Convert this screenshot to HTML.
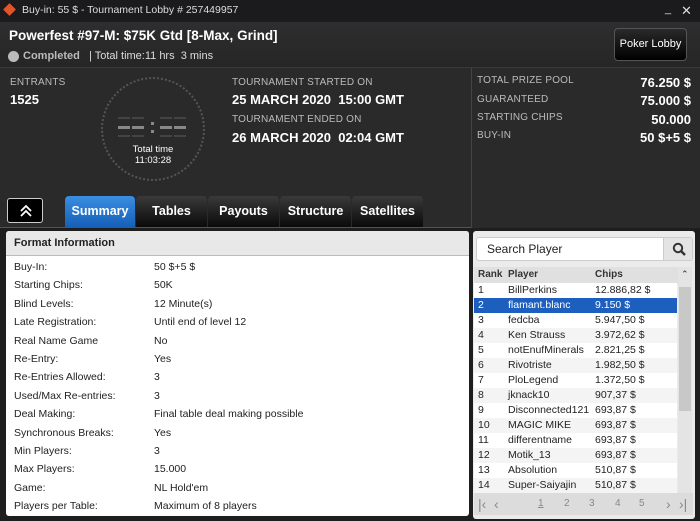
<!DOCTYPE html>
<html><head><style>
*{margin:0;padding:0;box-sizing:border-box}
body{width:700px;height:521px;background:#2a2a2a;font-family:"Liberation Sans",sans-serif;position:relative;overflow:hidden;color:#fff}
.a{position:absolute}
.tb{left:0;top:0;width:700px;height:22px;background:#1b1b1d;font-size:10.5px;color:#ddd}
.hd{left:0;top:22px;width:700px;height:46px;background:linear-gradient(#2e2e2e,#262626);border-bottom:1px solid #3a3a3a}
.lbl{font-size:10px;color:#bbb;letter-spacing:.2px}
.big{font-size:13px;font-weight:bold;color:#fff}
.tab{top:196px;height:31px;background:linear-gradient(#3a3a3a,#0a0a0a);border-radius:4px 4px 0 0;font-size:12.5px;font-weight:bold;color:#fff;text-align:center;line-height:31px}
.fi{font-size:10.5px;color:#222}
.row{position:absolute;left:0;width:203px;height:15px;font-size:10.5px;color:#222;line-height:15px}
.row span{position:absolute}
</style></head><body>
<div class="a tb"><div class="a" style="left:5px;top:5px;width:9px;height:9px;background:#e0552a;transform:rotate(45deg)"></div><div class="a" style="left:22px;top:4px">Buy-in: 55 $ - Tournament Lobby # 257449957</div><div class="a" style="left:665px;top:3px;font-size:11px">_</div><div class="a" style="left:681px;top:3px;font-size:13px">✕</div></div>
<div class="a hd">
<div class="a" style="left:9px;top:6px;font-size:13.5px;font-weight:bold">Powerfest #97-M: $75K Gtd [8-Max, Grind]</div>
<div class="a" style="left:8px;top:29px;width:11px;height:11px;border-radius:50%;background:#bbb"></div>
<div class="a" style="left:23px;top:28px;font-size:11px;font-weight:bold;color:#bbb">Completed</div>
<div class="a" style="left:89px;top:28px;font-size:11px;color:#ddd">| Total time:11 hrs &nbsp;3 mins</div>
<div class="a" style="left:614px;top:6px;width:73px;height:33px;border:1px solid #555;border-radius:4px;background:linear-gradient(#2a2a2a,#000);font-size:11px;line-height:31px;text-align:center">Poker Lobby</div>
</div>
<div class="a" style="left:471px;top:68px;width:1px;height:160px;background:#444"></div>
<div class="a lbl" style="left:10px;top:77px">ENTRANTS</div>
<div class="a big" style="left:10px;top:92px">1525</div>
<div class="a" style="left:101px;top:77px;width:104px;height:104px;border-radius:50%;border:2px dotted #555"></div>
<svg class="a" style="left:118px;top:117px" width="70" height="20"><g fill="#888"><rect x="0" y="9" width="12" height="3"/><rect x="14" y="9" width="12" height="3"/><rect x="42" y="9" width="12" height="3"/><rect x="56" y="9" width="12" height="3"/><rect x="33" y="5" width="3" height="3"/><rect x="33" y="13" width="3" height="3"/></g><g fill="#444"><rect x="0" y="0" width="12" height="2"/><rect x="14" y="0" width="12" height="2"/><rect x="42" y="0" width="12" height="2"/><rect x="56" y="0" width="12" height="2"/><rect x="0" y="18" width="12" height="2"/><rect x="14" y="18" width="12" height="2"/><rect x="42" y="18" width="12" height="2"/><rect x="56" y="18" width="12" height="2"/></g></svg>
<div class="a" style="left:101px;top:144px;width:104px;text-align:center;font-size:9.5px;line-height:11px">Total time<br>11:03:28</div>
<div class="a lbl" style="left:232px;top:77px">TOURNAMENT STARTED ON</div>
<div class="a big" style="left:232px;top:92px">25 MARCH 2020 &nbsp;15:00 GMT</div>
<div class="a lbl" style="left:232px;top:114px">TOURNAMENT ENDED ON</div>
<div class="a big" style="left:232px;top:130px">26 MARCH 2020 &nbsp;02:04 GMT</div>
<div class="a lbl" style="left:477px;top:75px">TOTAL PRIZE POOL</div><div class="a big" style="right:9px;top:75px">76.250 $</div>
<div class="a lbl" style="left:477px;top:94px">GUARANTEED</div><div class="a big" style="right:9px;top:93px">75.000 $</div>
<div class="a lbl" style="left:477px;top:112px">STARTING CHIPS</div><div class="a big" style="right:9px;top:112px">50.000</div>
<div class="a lbl" style="left:477px;top:130px">BUY-IN</div><div class="a big" style="right:9px;top:130px">50 $+5 $</div>
<div class="a" style="left:7px;top:198px;width:36px;height:25px;border:1px solid #ccc;border-radius:3px;background:#000"><svg class="a" style="left:11px;top:5px" width="14" height="14"><path d="M2 7 L7 2 L12 7 M2 12 L7 7 L12 12" stroke="#fff" stroke-width="1.8" fill="none"/></svg></div>
<div class="a tab" style="left:65px;width:70px;background:linear-gradient(#3a8ee0,#1560b8)">Summary</div>
<div class="a tab" style="left:136px;width:71px">Tables</div>
<div class="a tab" style="left:208px;width:71px">Payouts</div>
<div class="a tab" style="left:280px;width:71px">Structure</div>
<div class="a tab" style="left:352px;width:71px">Satellites</div>
<div class="a" style="left:0;top:227px;width:471px;height:1px;background:#2a5c9a"></div>
<div class="a" style="left:0;top:228px;width:700px;height:293px;background:#1e1e1e"></div>
<div class="a" style="left:6px;top:231px;width:463px;height:285px;background:#fff;border-radius:3px;overflow:hidden">
<div class="a" style="left:0;top:0;width:463px;height:25px;background:#e8e8e8;border-bottom:1px solid #bbb;font-size:11px;font-weight:bold;color:#222;line-height:25px;padding-left:8px">Format Information</div>
<div class="a fi" style="left:8px;top:27px;line-height:18.4px">Buy-In:<br>Starting Chips:<br>Blind Levels:<br>Late Registration:<br>Real Name Game<br>Re-Entry:<br>Re-Entries Allowed:<br>Used/Max Re-entries:<br>Deal Making:<br>Synchronous Breaks:<br>Min Players:<br>Max Players:<br>Game:<br>Players per Table:</div>
<div class="a fi" style="left:148px;top:27px;line-height:18.4px">50 $+5 $<br>50K<br>12 Minute(s)<br>Until end of level 12<br>No<br>Yes<br>3<br>3<br>Final table deal making possible<br>Yes<br>3<br>15.000<br>NL Hold'em<br>Maximum of 8 players</div>
</div>
<div class="a" style="left:473px;top:231px;width:222px;height:288px;background:#ebebeb;border-radius:3px;overflow:hidden">
<div class="a" style="left:3px;top:6px;width:217px;height:24px;background:#fff;border:1px solid #ccc;border-radius:3px;font-size:12px;color:#222;line-height:22px;padding-left:10px">Search Player</div>
<div class="a" style="left:190px;top:7px;width:29px;height:22px;background:#e4e4e4;border-left:1px solid #ccc"><svg class="a" style="left:8px;top:4px" width="14" height="14"><circle cx="6" cy="6" r="4.2" stroke="#333" stroke-width="2" fill="none"/><path d="M9 9 L13 13" stroke="#333" stroke-width="2.4"/></svg></div>
<div class="a" style="left:1px;top:36px;width:205px;height:16px;background:#e0e0e0;font-size:10px;font-weight:bold;color:#333;line-height:16px"><span class="a" style="left:4px">Rank</span><span class="a" style="left:34px">Player</span><span class="a" style="left:121px">Chips</span></div>
<div class="a" style="left:205px;top:36px;width:14px;height:226px;background:#e4e4e4"><div class="a" style="left:1px;top:20px;width:12px;height:124px;background:#c8c8c8"></div><div class="a" style="left:3px;top:2px;font-size:9px;color:#333">⌃</div></div>
<div class="a" style="left:1px;top:52px;width:204px;height:210px">
<div class="row" style="top:0;background:#fff"><span style="left:4px">1</span><span style="left:34px">BillPerkins</span><span style="left:121px">12.886,82 $</span></div>
<div class="row" style="top:15px;background:#1d5fbf;color:#fff"><span style="left:4px">2</span><span style="left:34px">flamant.blanc</span><span style="left:121px">9.150 $</span></div>
<div class="row" style="top:30px;background:#fff"><span style="left:4px">3</span><span style="left:34px">fedcba</span><span style="left:121px">5.947,50 $</span></div>
<div class="row" style="top:45px;background:#f4f4f4"><span style="left:4px">4</span><span style="left:34px">Ken Strauss</span><span style="left:121px">3.972,62 $</span></div>
<div class="row" style="top:60px;background:#fff"><span style="left:4px">5</span><span style="left:34px">notEnufMinerals</span><span style="left:121px">2.821,25 $</span></div>
<div class="row" style="top:75px;background:#f4f4f4"><span style="left:4px">6</span><span style="left:34px">Rivotriste</span><span style="left:121px">1.982,50 $</span></div>
<div class="row" style="top:90px;background:#fff"><span style="left:4px">7</span><span style="left:34px">PloLegend</span><span style="left:121px">1.372,50 $</span></div>
<div class="row" style="top:105px;background:#f4f4f4"><span style="left:4px">8</span><span style="left:34px">jknack10</span><span style="left:121px">907,37 $</span></div>
<div class="row" style="top:120px;background:#fff"><span style="left:4px">9</span><span style="left:34px">Disconnected121</span><span style="left:121px">693,87 $</span></div>
<div class="row" style="top:135px;background:#f4f4f4"><span style="left:4px">10</span><span style="left:34px">MAGIC MIKE</span><span style="left:121px">693,87 $</span></div>
<div class="row" style="top:150px;background:#fff"><span style="left:4px">11</span><span style="left:34px">differentname</span><span style="left:121px">693,87 $</span></div>
<div class="row" style="top:165px;background:#f4f4f4"><span style="left:4px">12</span><span style="left:34px">Motik_13</span><span style="left:121px">693,87 $</span></div>
<div class="row" style="top:180px;background:#fff"><span style="left:4px">13</span><span style="left:34px">Absolution</span><span style="left:121px">510,87 $</span></div>
<div class="row" style="top:195px;background:#f4f4f4"><span style="left:4px">14</span><span style="left:34px">Super-Saiyajin</span><span style="left:121px">510,87 $</span></div>
</div>
<div class="a" style="left:1px;top:262px;width:219px;height:22px;background:#dcdcdc;font-size:10px;color:#888;line-height:22px">
<span class="a" style="left:4px;font-size:14px">|‹</span><span class="a" style="left:20px;font-size:14px">‹</span>
<span class="a" style="left:64px;text-decoration:underline">1</span><span class="a" style="left:90px">2</span><span class="a" style="left:115px">3</span><span class="a" style="left:141px">4</span><span class="a" style="left:165px">5</span>
<span class="a" style="left:192px;font-size:14px">›</span><span class="a" style="left:205px;font-size:14px">›|</span></div>
</div>
</body></html>
